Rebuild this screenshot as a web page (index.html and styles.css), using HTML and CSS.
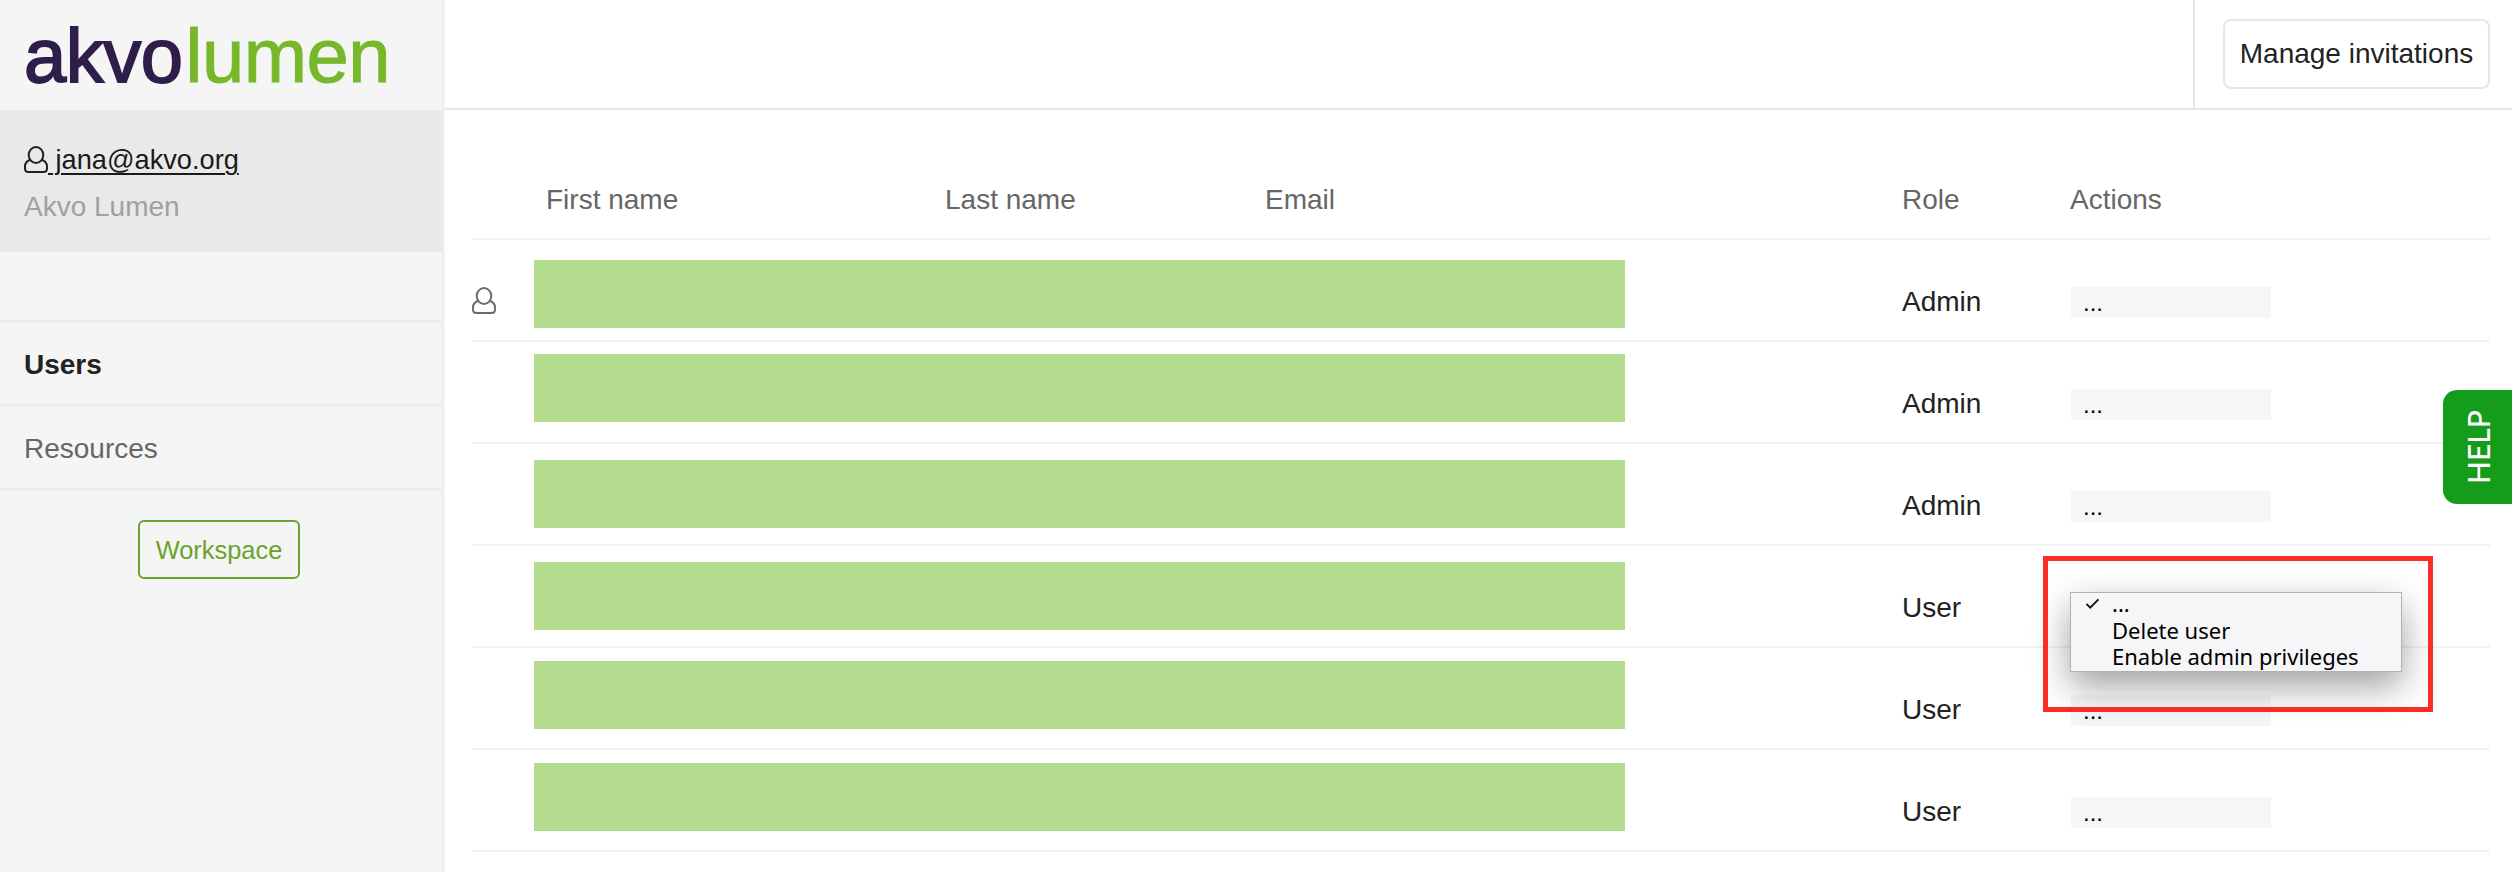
FILE: index.html
```html
<!DOCTYPE html>
<html lang="en">
<head>
  <meta charset="UTF-8" />
  <meta name="viewport" content="width=device-width, initial-scale=1.0" />
  <title>Akvo Lumen - Users</title>
  <link rel="stylesheet" href="styles.css">
</head>
<body>
  <div class="app">
    <aside class="sidebar">
      <div class="logo"><span class="logo-akvo">akvo</span><span class="logo-lumen">lumen</span></div>
      <div class="user-box">
        <a class="user-link" href="#"><svg class="person" viewBox="0 0 24 27"><ellipse cx="12" cy="9" rx="7.3" ry="8" /><path d="M7 13.5C3.5 14.5 1 17 1 20.5V22.5Q1 26 4.5 26H19.5Q23 26 23 22.5V20.5C23 17 20.5 14.5 17 13.5" /></svg> jana@akvo.org</a>
        <div class="org-name">Akvo Lumen</div>
      </div>
      <nav class="nav">
        <a class="nav-item active" href="#">Users</a>
        <a class="nav-item" href="#">Resources</a>
      </nav>
      <a class="workspace-btn" href="#">Workspace</a>
    </aside>

    <main class="main">
      <header class="topbar">
        <div class="topbar-actions">
          <button class="manage-btn">Manage invitations</button>
        </div>
      </header>

      <section class="users">
        <div class="users-head">
          <span></span>
          <span>First name</span>
          <span>Last name</span>
          <span>Email</span>
          <span>Role</span>
          <span>Actions</span>
        </div>

        <div class="user-row">
          <div class="row-icon"><svg class="person grey" viewBox="0 0 24 27"><ellipse cx="12" cy="9" rx="7.3" ry="8" /><path d="M7 13.5C3.5 14.5 1 17 1 20.5V22.5Q1 26 4.5 26H19.5Q23 26 23 22.5V20.5C23 17 20.5 14.5 17 13.5" /></svg></div>
          <div class="redacted"></div>
          <div class="role">Admin</div>
          <div class="action-select">...</div>
        </div>
        <div class="user-row">
          <div class="row-icon"></div>
          <div class="redacted"></div>
          <div class="role">Admin</div>
          <div class="action-select">...</div>
        </div>
        <div class="user-row">
          <div class="row-icon"></div>
          <div class="redacted"></div>
          <div class="role">Admin</div>
          <div class="action-select">...</div>
        </div>
        <div class="user-row">
          <div class="row-icon"></div>
          <div class="redacted"></div>
          <div class="role">User</div>
          <div class="action-select">...
            <div class="highlight"></div>
            <ul class="select-menu">
              <li class="checked"><svg class="check" viewBox="0 0 16 12"><path d="M1.5 6.5L5.5 10.5L14.5 1.5" /></svg>...</li>
              <li>Delete user</li>
              <li>Enable admin privileges</li>
            </ul>
          </div>
        </div>
        <div class="user-row">
          <div class="row-icon"></div>
          <div class="redacted"></div>
          <div class="role">User</div>
          <div class="action-select">...</div>
        </div>
        <div class="user-row">
          <div class="row-icon"></div>
          <div class="redacted"></div>
          <div class="role">User</div>
          <div class="action-select">...</div>
        </div>
      </section>
    </main>
  </div>

  <div class="help-tab">HELP</div>
</body>
</html>
```

FILE: styles.css
```css
body { margin: 0; font-family: "Liberation Sans", Arial, sans-serif; font-size: 28px; color: #222; background: white; overflow: hidden; }
a { color: inherit; text-decoration: none; }

.app { display: flex; height: 872px; }

/* sidebar */
.sidebar { width: 442px; flex-shrink: 0; background: #f5f5f5; border-right: 2px solid #ececec; box-shadow: 2px 0 4px rgba(0,0,0,0.02); }
.logo { height: 110px; padding-left: 24px; box-sizing: border-box; font-size: 76px; line-height: 111px; letter-spacing: -0.5px; white-space: nowrap; }
.logo-akvo { color: #2f1e4a; -webkit-text-stroke: 1.8px #2f1e4a; }
.logo-lumen { color: #76b82a; -webkit-text-stroke: 1px #76b82a; margin-left: 3px; }
.user-box { height: 142px; box-sizing: border-box; padding: 34px 24px 0; background: #e9e9e9; }
.user-link { text-decoration: underline; text-underline-offset: 4px; text-decoration-thickness: 1.5px; color: #1a1a1a; font-size: 27.2px; line-height: 32px; }
.person { width: 24px; height: 27px; fill: none; stroke: #222; stroke-width: 2; vertical-align: -4px; }
.person.grey { stroke: #6b6b70; }
.org-name { margin-top: 15px; line-height: 32px; color: #a0a0a4; }
.nav { margin-top: 68px; border-top: 2px solid #ececec; }
.nav-item { display: block; height: 82px; line-height: 86px; padding-left: 24px; border-bottom: 2px solid #ececec; color: #666; overflow: hidden; }
.nav-item.active { font-weight: bold; color: #222; }
.workspace-btn { display: block; width: 162px; height: 59px; box-sizing: border-box; margin: 30px 0 0 138px; border: 2px solid #6aa329; border-radius: 6px; font-size: 25.4px; line-height: 56px; text-align: center; color: #6aa329; }

/* top bar */
.main { flex: 1; min-width: 0; }
.topbar { height: 108px; display: flex; justify-content: flex-end; border-bottom: 2px solid #e6e6ec; padding-right: 22px; }
.topbar-actions { border-left: 2px solid #e6e6ec; padding: 19px 0 19px 28px; }
.manage-btn { width: 267px; height: 70px; padding: 0; background: white; border: 2px solid #e6e6ec; border-radius: 8px; font-family: inherit; font-size: 28px; line-height: 34px; color: #222; }

/* table */
.users { margin: 0 22px 0 28px; }
.users-head { display: grid; grid-template-columns: 74px 399px 320px 637px 168px 1fr; height: 130px; box-sizing: border-box; padding-top: 74px; line-height: 32px; color: #666; border-bottom: 2px solid #f2f2f2; }
.user-row { display: grid; grid-template-columns: 62px 1368px 169px 1fr; height: 102px; box-sizing: border-box; border-bottom: 2px solid #f2f2f2; }
.row-icon { padding-top: 47px; line-height: 0; }
.redacted { width: 1091px; height: 68px; background: #b3dc8f; }
.user-row:nth-of-type(2) .redacted { margin-top: 20px; }
.user-row:nth-of-type(3) .redacted { margin-top: 12px; }
.user-row:nth-of-type(4) .redacted { margin-top: 16px; }
.user-row:nth-of-type(5) .redacted { margin-top: 16px; }
.user-row:nth-of-type(6) .redacted { margin-top: 13px; }
.user-row:nth-of-type(7) .redacted { margin-top: 13px; }
.role { padding-top: 45px; line-height: 33px; color: #222; }
.action-select { position: relative; width: 200px; height: 31px; margin-top: 47px; padding-left: 12px; box-sizing: border-box; background: #f6f6f8; font-size: 24px; line-height: 31px; color: #000; }

/* open dropdown */
.select-menu { position: absolute; z-index: 2; left: -1px; top: -1px; width: 332px; height: 80px; box-sizing: border-box; margin: 0; padding: 0 0 0 41px; list-style: none; background: #f6f6f8; border: 1px solid #b0b0b0; box-shadow: 0 14px 36px rgba(0,0,0,0.38); font-family: "Noto Sans", sans-serif; font-size: 22px; line-height: 20px; color: #000; white-space: nowrap; }
.select-menu li { position: relative; height: 26.5px; }
.check { position: absolute; left: -27px; top: 5px; width: 15px; height: 11px; fill: none; stroke: #111; stroke-width: 2; }
.highlight { position: absolute; z-index: 3; left: -28px; top: -37px; width: 390px; height: 156px; box-sizing: border-box; border: 5px solid #fb2d24; }

/* help */
.help-tab { position: absolute; right: 0; top: 390px; width: 69px; height: 114px; display: flex; align-items: center; justify-content: center; box-sizing: border-box; background: #169c1b; color: white; font-family: Lato, sans-serif; font-size: 30px; font-weight: 500; writing-mode: vertical-rl; transform: rotate(180deg); border-radius: 0 14px 14px 0; }
```
